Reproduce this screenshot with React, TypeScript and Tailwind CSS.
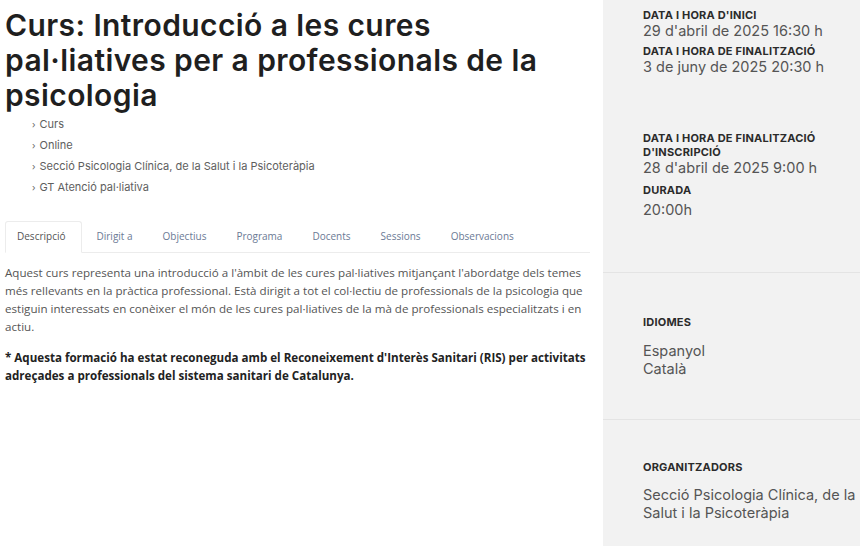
import React from 'react';

const tabs = ['Descripció', 'Dirigit a', 'Objectius', 'Programa', 'Docents', 'Sessions', 'Observacions'];
const tags = ['Curs', 'Online', 'Secció Psicologia Clínica, de la Salut i la Psicoteràpia', 'GT Atenció pal·liativa'];

function Label({ children }: { children: React.ReactNode }) {
  return <div className="text-[11px] font-bold uppercase leading-[14px] tracking-[0.2px] text-[#2b2b2b]">{children}</div>;
}

function Value({ children }: { children: React.ReactNode }) {
  return <div className="text-[14.5px] leading-[18px] text-[#555]">{children}</div>;
}

export default function App() {
  return (
    <div className="flex h-[546px] w-[860px] overflow-hidden bg-white font-['Inter',sans-serif]">
      <main className="w-[603px] shrink-0 pl-[5px] pr-[13px]">
        <h1 className="mt-[8px] text-[30px] font-semibold leading-[35px] tracking-[0.4px] text-[#1f1f1f]">
          Curs: Introducció a les cures
          <br />
          pal·liatives per a professionals de la
          <br />
          psicologia
        </h1>
        <ul className="mt-[4px] flex flex-col gap-[6px] pl-[27px] text-[11px] leading-[15px] text-[#5e5e5e]">
          {tags.map((t) => (
            <li key={t} className="flex gap-[4px]">
              <span className="text-[9px]">›</span>
              <span>{t}</span>
            </li>
          ))}
        </ul>
        <div className="mt-[26px] flex border-b border-[#ececec] text-[10px] font-['Open_Sans',sans-serif]">
          {tabs.map((t, i) => (
            <div
              key={t}
              className={
                i === 0
                  ? '-mb-px rounded-t-[3px] border border-b-white border-[#ececec] py-[7px] pl-[11px] pr-[15px] text-[#555]'
                  : 'border border-transparent px-[14px] py-[7px] text-[#6b7a95]'
              }
            >
              {t}
            </div>
          ))}
        </div>
        <div className="mt-[11px] font-['Open_Sans',sans-serif] text-[11.6px] leading-[18px] text-[#555]">
          <p className="pr-[2px]">
            Aquest curs representa una introducció a l'àmbit de les cures pal·liatives mitjançant l'abordatge dels temes més
            rellevants en la pràctica professional. Està dirigit a tot el col·lectiu de professionals de la psicologia que
            estiguin interessats en conèixer el món de les cures pal·liatives de la mà de professionals especialitzats i en
            actiu.
          </p>
          <p className="mt-[13px] font-bold text-[#222]">
            * Aquesta formació ha estat reconeguda amb el Reconeixement d'Interès Sanitari (RIS) per activitats adreçades a
            professionals del sistema sanitari de Catalunya.
          </p>
        </div>
      </main>
      <aside className="flex h-full w-[300px] shrink-0 flex-col bg-[#f2f2f2]">
        <div className="h-[272px] pl-[40px] pt-[8px]">
          <Label>Data i hora d'inici</Label>
          <Value>29 d'abril de 2025 16:30 h</Value>
          <div className="mt-[4px]">
            <Label>Data i hora de finalització</Label>
            <Value>3 de juny de 2025 20:30 h</Value>
          </div>
          <div className="mt-[55px]">
            <Label>
              Data i hora de finalització
              <br />
              d'inscripció
            </Label>
            <Value>28 d'abril de 2025 9:00 h</Value>
          </div>
          <div className="mt-[6px]">
            <Label>Durada</Label>
            <div className="mt-[4px]">
              <Value>20:00h</Value>
            </div>
          </div>
        </div>
        <div className="h-[147px] border-t border-[#e4e4e4] pl-[40px] pt-[42px]">
          <Label>Idiomes</Label>
          <div className="mt-[13px]">
            <Value>Espanyol</Value>
            <Value>Català</Value>
          </div>
        </div>
        <div className="flex-1 border-t border-[#e4e4e4] pl-[40px] pt-[40px]">
          <Label>Organitzadors</Label>
          <div className="mt-[12px]">
            <Value>
              Secció Psicologia Clínica, de la
              <br />
              Salut i la Psicoteràpia
            </Value>
          </div>
        </div>
      </aside>
    </div>
  );
}
